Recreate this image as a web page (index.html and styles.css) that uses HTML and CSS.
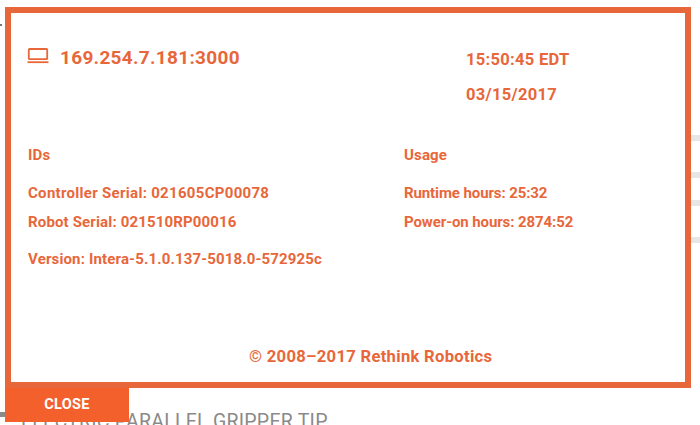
FILE: index.html
```html
<!DOCTYPE html>
<html lang="en">
<head>
    <meta charset="UTF-8">
    <meta name="viewport" content="width=device-width, initial-scale=1.0">
    <title>About</title>
    <link rel="stylesheet" href="styles.css">
</head>
<body>
    <!-- page behind the dialog, only its edges show -->
    <div class="backdrop">
        <span class="corner-mark"></span>
        <div class="ticks">
            <span class="tick"></span>
            <span class="tick"></span>
            <span class="tick"></span>
            <span class="tick"></span>
        </div>
        <div class="behind-title">
            <span class="behind-bar"></span>
            <span class="behind-text">ELECTRIC PARALLEL GRIPPER TIP</span>
        </div>
    </div>

    <div class="dialog">
        <div class="box">
            <div class="top-row">
                <div class="address">
                    <svg class="laptop" width="22" height="16" viewBox="0 0 22 16" fill="none" stroke="#e8673a" stroke-width="1.8">
                        <rect x="1.8" y="1" width="18.4" height="10.2" rx="0.8"/>
                        <path d="M0.5 14.2H21.5"/>
                    </svg>
                    <span>169.254.7.181:3000</span>
                </div>
                <div class="clock">
                    <div>15:50:45 EDT</div>
                    <div>03/15/2017</div>
                </div>
            </div>
            <div class="info">
                <div class="col-ids">
                    <h3>IDs</h3>
                    <p class="serial">Controller Serial: 021605CP00078</p>
                    <p>Robot Serial: 021510RP00016</p>
                    <p class="version">Version: Intera-5.1.0.137-5018.0-572925c</p>
                </div>
                <div class="col-usage">
                    <h3>Usage</h3>
                    <p>Runtime hours: 25:32</p>
                    <p>Power-on hours: 2874:52</p>
                </div>
            </div>
            <div class="copyright">© 2008–2017 Rethink Robotics</div>
        </div>
        <button class="close-btn">CLOSE</button>
    </div>
</body>
</html>
```

FILE: styles.css
```css
* { margin: 0; padding: 0; box-sizing: border-box; }
html, body {
    width: 700px;
    height: 425px;
    overflow: hidden;
}
body {
    font-family: Roboto, 'Liberation Sans', sans-serif;
    font-weight: 700;
    background: #fff;
    color: #e8673a;
    position: relative;
}
.backdrop {
    height: 425px;
    display: flex;
    flex-direction: column;
    padding-top: 24px;
}
.corner-mark {
    width: 2px;
    height: 2px;
    background: #777;
}
.ticks {
    display: flex;
    flex-direction: column;
    align-items: flex-end;
    margin-top: 109px;
}
.tick {
    width: 9px;
    height: 6px;
    background: #e9e7e6;
    margin-bottom: 31px;
}
.tick:nth-child(2) { margin-bottom: 22px; }
.behind-title {
    display: flex;
    align-items: flex-start;
    height: 13px;
    margin-top: auto;
    font-size: 19.5px;
    font-weight: 400;
    line-height: 20px;
    color: #8a8a8a;
    overflow: hidden;
}
.behind-text {
    margin-left: 11px;
    letter-spacing: 0.25px;
    white-space: nowrap;
}
.behind-bar {
    flex: none;
    width: 10px;
    height: 5px;
    background: #8a8a8a;
}
/* dialog sits over the page */
.dialog {
    position: absolute;
    left: 5px;
    top: 7px;
    width: 686px;
}
.box {
    height: 381px;
    border: 6px solid #e8673a;
    background: #fff;
    padding: 32px 0 0 17px;
    display: flex;
    flex-direction: column;
}
.top-row {
    display: flex;
    height: 100px;
}
.address {
    width: 438px;
    display: flex;
    align-items: flex-start;
    gap: 11px;
    font-size: 19px;
    line-height: 26px;
    letter-spacing: 0.3px;
}
.laptop { margin: 3px 0 0 -1px; }
.clock {
    font-size: 16.5px;
    line-height: 35px;
    letter-spacing: 0.3px;
    margin-top: -3px;
}
.info {
    display: flex;
    font-size: 15px;
    line-height: 20px;
    letter-spacing: 0.15px;
}
.col-ids { width: 376px; }
.col-usage p { letter-spacing: -0.1px; }
.info h3 {
    font-size: 15px;
    font-weight: 700;
    margin-bottom: 18px;
}
.info p { margin-bottom: 9px; }
.info p.serial { letter-spacing: 0.3px; }
.info p.version { margin-top: 17px; }
.copyright {
    margin-top: auto;
    margin-bottom: 14px;
    padding-left: 221px;
    font-size: 16.6px;
    line-height: 22px;
    letter-spacing: 0.3px;
}
.close-btn {
    display: block;
    width: 124px;
    height: 34px;
    padding-bottom: 2px;
    border: none;
    background: #f4602b;
    color: #fff;
    font-family: Roboto, 'Liberation Sans', sans-serif;
    font-weight: 700;
    font-size: 14.5px;
    letter-spacing: 0.3px;
}
```
